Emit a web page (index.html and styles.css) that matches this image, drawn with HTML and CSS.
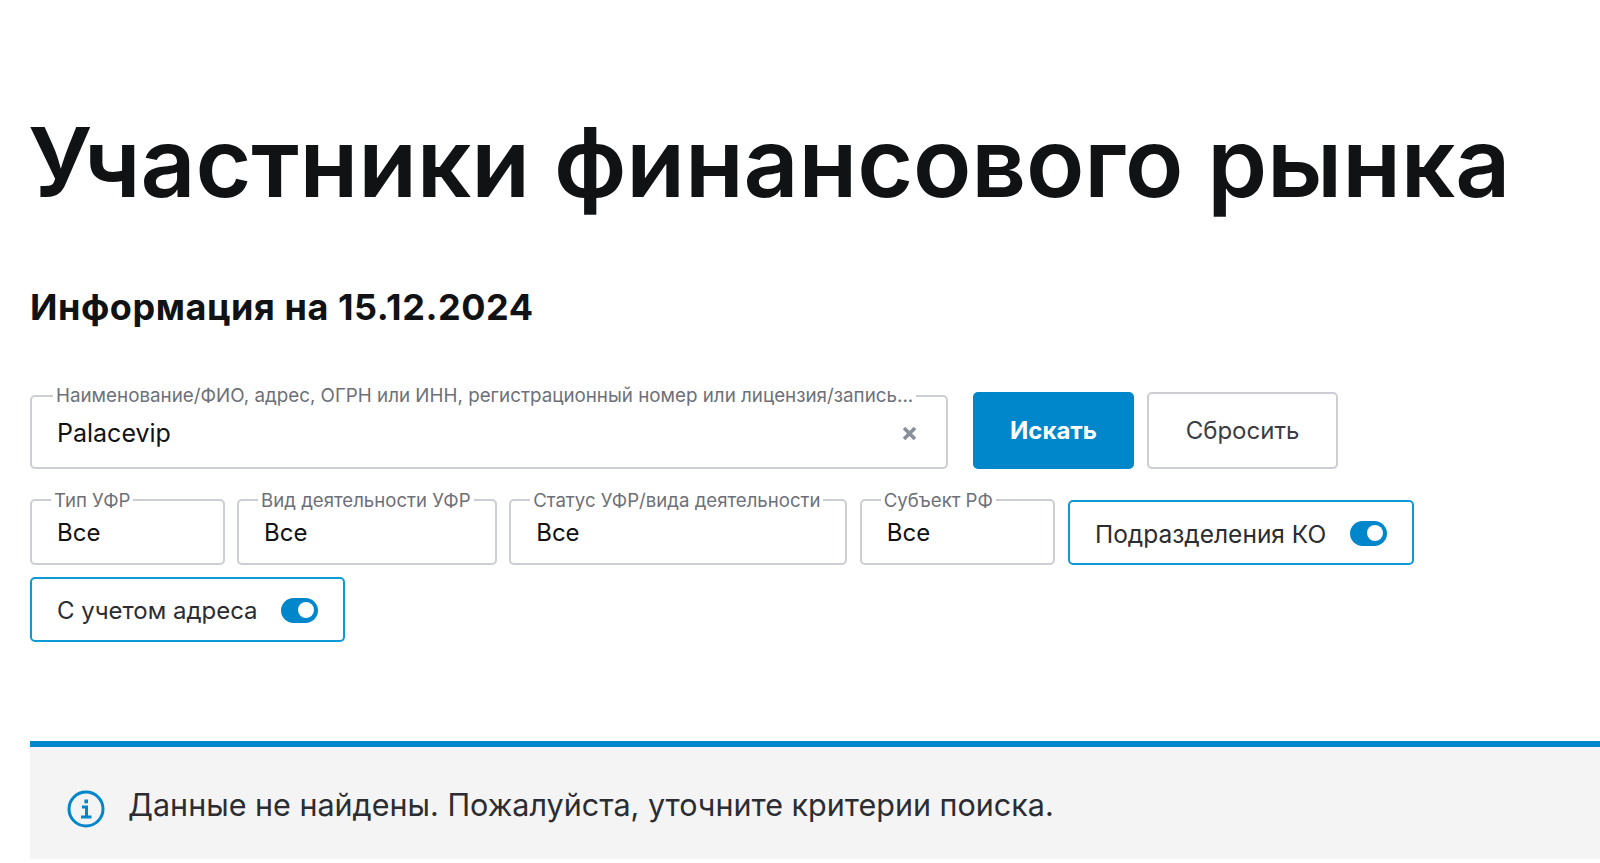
FILE: index.html
```html
<!DOCTYPE html>
<html lang="ru">

<head>
    <meta charset="UTF-8">
    <meta name="viewport" content="width=device-width, initial-scale=1.0">
    <title>Участники финансового рынка</title>

    <link rel="stylesheet" href="styles.css">
</head>

<body>

    <main class="page">
        <h1>Участники финансового рынка</h1>
        <h2>Информация на 15.12.2024</h2>

        <div class="search-row">
            <fieldset class="field field-search">
                <legend>Наименование/ФИО, адрес, ОГРН или ИНН, регистрационный номер или лицензия/запись...</legend>
                <div class="field-value">
                    <span>Palacevip</span>
                    <svg class="clear-icon" viewBox="0 0 14 14" aria-hidden="true">
                        <path d="M2.5 2.5l9 9M11.5 2.5l-9 9" />
                    </svg>
                </div>
            </fieldset>
            <button class="btn btn-primary">Искать</button>
            <button class="btn">Сбросить</button>
        </div>

        <div class="filter-row">
            <fieldset class="field field-type">
                <legend>Тип УФР</legend>
                <div class="field-value">Все</div>
            </fieldset>
            <fieldset class="field field-activity">
                <legend>Вид деятельности УФР</legend>
                <div class="field-value">Все</div>
            </fieldset>
            <fieldset class="field field-status">
                <legend>Статус УФР/вида деятельности</legend>
                <div class="field-value">Все</div>
            </fieldset>
            <fieldset class="field field-region">
                <legend>Субъект РФ</legend>
                <div class="field-value">Все</div>
            </fieldset>
            <div class="switch-box switch-units">
                <span>Подразделения КО</span>
                <span class="switch"></span>
            </div>
            <div class="switch-box switch-address">
                <span>С учетом адреса</span>
                <span class="switch"></span>
            </div>
        </div>

        <div class="notice">
            <svg class="info-icon" viewBox="0 0 38 38" aria-hidden="true">
                <circle cx="19" cy="19" r="17" />
                <path d="M15 17h4.5v10M14 27h10.5" />
                <path class="info-dot" d="M17.4 9.5h3.6v3.8h-3.6z" />
            </svg>
            <p>Данные не найдены. Пожалуйста, уточните критерии поиска.</p>
        </div>
    </main>

</body>

</html>
```

FILE: styles.css
```css
* {
    margin: 0;
    padding: 0;
    box-sizing: border-box;
}

body {
    background-color: #fff;
    font-family: Inter, "Noto Sans", sans-serif;
    color: #111214;
}

.page {
    padding: 105px 0 0 30px;
    height: 863px;
    overflow: hidden;
}

h1 {
    margin-left: -2px;
    font-size: 96px;
    font-weight: 600;
    line-height: 114px;
    letter-spacing: -0.15px;
    white-space: nowrap;
}

h2 {
    margin-top: 66px;
    font-size: 36px;
    font-weight: 700;
    line-height: 44px;
    letter-spacing: 0.55px;
}

.search-row {
    display: flex;
    align-items: flex-end;
    margin-top: 56px;
}

.filter-row {
    display: flex;
    flex-wrap: wrap;
    gap: 12px 12.6px;
    margin-top: 20px;
    width: 1400px;
}

.field {
    border: 2px solid #cdced4;
    border-radius: 5px;
    min-width: 0;
    flex: none;
}

.field legend {
    margin-left: 21px;
    padding: 0 3px;
    font-size: 18.8px;
    line-height: 22px;
    color: #6d7079;
    white-space: nowrap;
}

.filter-row .field legend {
    margin-left: 19px;
    font-size: 18.6px;
}

.field-value {
    display: flex;
    justify-content: space-between;
    align-items: center;
    padding: 0 28px 0 25px;
    font-size: 24px;
}

.field-search {
    width: 918px;
    height: 84px;
}

.field-search .field-value {
    height: 52px;
    font-size: 25px;
}

.filter-row .field {
    height: 76px;
}

.filter-row .field-value {
    height: 43px;
}

.field-type {
    width: 194.5px;
}

.field-region {
    width: 195.6px;
}

.field-activity {
    width: 259.5px;
}

.field-status {
    width: 338px;
}

.clear-icon {
    width: 17px;
    height: 17px;
    fill: none;
    stroke: #8a8e99;
    stroke-width: 3;
}

.btn {
    height: 77px;
    width: 191px;
    margin-left: 13px;
    border: 2px solid #cdced4;
    border-radius: 5px;
    background-color: #fff;
    color: #3b3d44;
    font-family: inherit;
    font-size: 24px;
}

.btn-primary {
    width: 161px;
    margin-left: 25px;
    border-color: #0086cb;
    background-color: #0086cb;
    color: #fff;
    font-weight: 700;
}

.switch-box {
    display: flex;
    justify-content: space-between;
    align-items: center;
    height: 65px;
    padding: 2px 25px 0;
    border: 2px solid #0c9ad6;
    border-radius: 5px;
    font-size: 24.5px;
    color: #2b2d33;
    align-self: flex-end;
}

.switch-units {
    width: 346px;
}

.switch-address {
    width: 315px;
    font-size: 24px;
}

.switch {
    position: relative;
    width: 37px;
    height: 25px;
    border-radius: 13px;
    background-color: #0086cb;
}

.switch::after {
    content: "";
    position: absolute;
    top: 4px;
    right: 4px;
    width: 16px;
    height: 16px;
    border-radius: 50%;
    background-color: #fff;
}

.notice {
    display: flex;
    align-items: center;
    gap: 23px;
    height: 118px;
    margin-top: 99px;
    padding: 0 0 0 37px;
    border-top: 6px solid #0086cb;
    background-color: #f4f4f4;
}

.notice p {
    margin-top: 3px;
    font-size: 30.5px;
    color: #2b2d33;
}

.info-icon {
    width: 38px;
    height: 38px;
    margin-top: 12px;
    fill: none;
    stroke: #0086cb;
    stroke-width: 3;
}

.info-dot {
    fill: #0086cb;
    stroke: none;
}
```
